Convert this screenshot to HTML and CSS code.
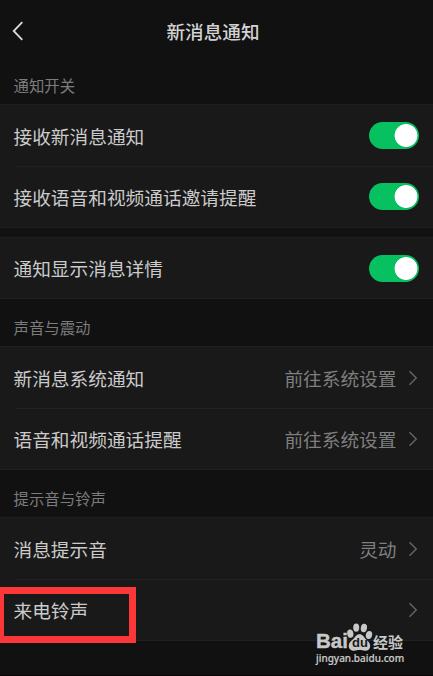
FILE: index.html
```
<!DOCTYPE html>
<html lang="zh-CN">
<head>
    <meta charset="UTF-8">
    <meta name="viewport" content="width=device-width, initial-scale=1.0">
    <title>新消息通知</title>
    <link rel="stylesheet" href="styles.css">
</head>
<body>
    <div class="screen">
        <header>
            <svg class="back" width="12" height="20" viewBox="0 0 12 20"><path d="M10.3 1.2 1.7 10l8.6 8.8"/></svg>
            <h1>新消息通知</h1>
        </header>

        <main>
            <!-- Switches -->
            <h2>通知开关</h2>
            <ul class="list">
                <li><span>接收新消息通知</span><i class="switch"></i></li>
                <li><span>接收语音和视频通话邀请提醒</span><i class="switch"></i></li>
            </ul>
            <ul class="list list-gap">
                <li><span>通知显示消息详情</span><i class="switch"></i></li>
            </ul>

            <!-- Sound and vibration -->
            <h2>声音与震动</h2>
            <ul class="list">
                <li>
                    <span>新消息系统通知</span>
                    <span class="value">前往系统设置</span>
                    <svg class="arrow" width="10" height="16" viewBox="0 0 10 16"><path d="M1.5 1.2 8.2 8l-6.7 6.8"/></svg>
                </li>
                <li>
                    <span>语音和视频通话提醒</span>
                    <span class="value">前往系统设置</span>
                    <svg class="arrow" width="10" height="16" viewBox="0 0 10 16"><path d="M1.5 1.2 8.2 8l-6.7 6.8"/></svg>
                </li>
            </ul>

            <!-- Tones -->
            <h2>提示音与铃声</h2>
            <ul class="list">
                <li>
                    <span>消息提示音</span>
                    <span class="value">灵动</span>
                    <svg class="arrow" width="10" height="16" viewBox="0 0 10 16"><path d="M1.5 1.2 8.2 8l-6.7 6.8"/></svg>
                </li>
                <li class="marked">
                    <span>来电铃声</span>
                    <span class="value"></span>
                    <svg class="arrow" width="10" height="16" viewBox="0 0 10 16"><path d="M1.5 1.2 8.2 8l-6.7 6.8"/></svg>
                </li>
            </ul>
        </main>

        <div class="watermark">
            <div class="brand">
                <b>Bai</b>
                <span class="paw">
                    <svg width="27" height="28" viewBox="0 0 27 28">
                        <ellipse cx="4.3" cy="10.6" rx="3.1" ry="4.2" transform="rotate(-10 4.3 10.6)"/>
                        <ellipse cx="10.2" cy="4.6" rx="3" ry="4.2"/>
                        <ellipse cx="17.9" cy="5" rx="3.1" ry="4.2" transform="rotate(10 17.9 5)"/>
                        <ellipse cx="23" cy="12" rx="3.1" ry="4.1" transform="rotate(15 23 12)"/>
                        <path d="M13.5 11.3c-3.3 0-4 2.6-6.2 4.7-2.3 2.1-4.6 3.5-4.6 6.7 0 3.2 2.5 5 5.3 5 2.1 0 3.6-.6 5.5-.6s3.6.7 5.7.7c3 0 5-1.9 5-4.9 0-3.1-2.5-4.8-4.6-6.9-2-2.1-2.9-4.7-6.1-4.7z"/>
                    </svg>
                    <em>du</em>
                </span>
                <strong>经验</strong>
            </div>
            <p>jingyan.baidu.com</p>
        </div>
    </div>
</body>
</html>
```
FILE: styles.css
```
body, h1, h2, p, ul, li {
    margin: 0;
    padding: 0;
    box-sizing: border-box;
}

body {
    font-family: 'Noto Sans CJK SC', sans-serif;
    background: #111;
    color: #cbcbcb;
}

.screen {
    position: relative;
    height: 676px;
    overflow: hidden;
    border-bottom: 1px solid #080306;
    box-sizing: border-box;
}

/* Header */
header {
    display: grid;
    grid-template-columns: 40px 1fr 47px;
    align-items: center;
    height: 61px;
}

.back {
    margin-left: 12px;
}

.back path,
.arrow path {
    fill: none;
    stroke: #dcdcdc;
    stroke-width: 1.8;
}

h1 {
    font-size: 18.6px;
    font-weight: 500;
    line-height: 28px;
    text-align: center;
    color: #d2d2d2;
}

h2 {
    height: 47px;
    padding-left: 13.5px;
    font-size: 15.4px;
    font-weight: 400;
    line-height: 57px;
    color: #7c7c7c;
}

header + main h2:first-child {
    height: 43px;
    line-height: 48px;
}

/* Lists */
.list {
    list-style: none;
    background: #191919;
    border-top: 1px solid #1e1e1e;
    border-bottom: 1px solid #202020;
}

.list-gap {
    margin-top: 9px;
}

.list li {
    position: relative;
    display: flex;
    align-items: center;
    height: 61px;
    padding: 0 14.5px 0 13.5px;
    font-size: 18.7px;
    line-height: 28px;
    white-space: nowrap;
}

.list-gap li {
    height: 60px;
}

.list li + li::before {
    content: "";
    position: absolute;
    top: 0;
    left: 15px;
    right: 0;
    height: 1px;
    background: #222;
}

.value {
    margin-left: auto;
    color: #7f7f7f;
}

.arrow {
    margin-left: 11px;
}

.arrow path {
    stroke: #636363;
    stroke-width: 1.5;
}

.value + .arrow {
    margin-right: 1px;
}

.switch {
    width: 50px;
    height: 27px;
    margin-left: auto;
    border-radius: 14px;
    background: radial-gradient(circle at 37px 13.5px, #fff 11px, #07c160 11.8px);
}

.marked::after {
    content: "";
    position: absolute;
    top: 8px;
    left: -4px;
    width: 140px;
    height: 56px;
    border: 7px solid #fb3837;
    border-left-width: 8px;
    box-sizing: border-box;
}

/* Watermark */
.watermark {
    position: absolute;
    left: 316px;
    top: 622px;
    color: #c8c8c8;
}

.brand {
    display: flex;
    align-items: flex-end;
    height: 29px;
}

.brand b {
    width: 30px;
    font: bold 20.5px/20px 'Liberation Sans', sans-serif;
    -webkit-text-stroke: 0.4px #c8c8c8;
}

.paw {
    position: relative;
    width: 27px;
    height: 28px;
}

.paw svg {
    display: block;
    fill: #c8c8c8;
}

.paw em {
    position: absolute;
    left: 6px;
    top: 13px;
    font: bold 13px/14px 'Liberation Sans', sans-serif;
    color: #191919;
}

.brand strong {
    font-size: 15px;
    line-height: 19px;
}

.watermark p {
    font: 500 10px/14px 'Noto Sans', sans-serif;
    -webkit-text-stroke: 0.2px #c8c8c8;
}
```
